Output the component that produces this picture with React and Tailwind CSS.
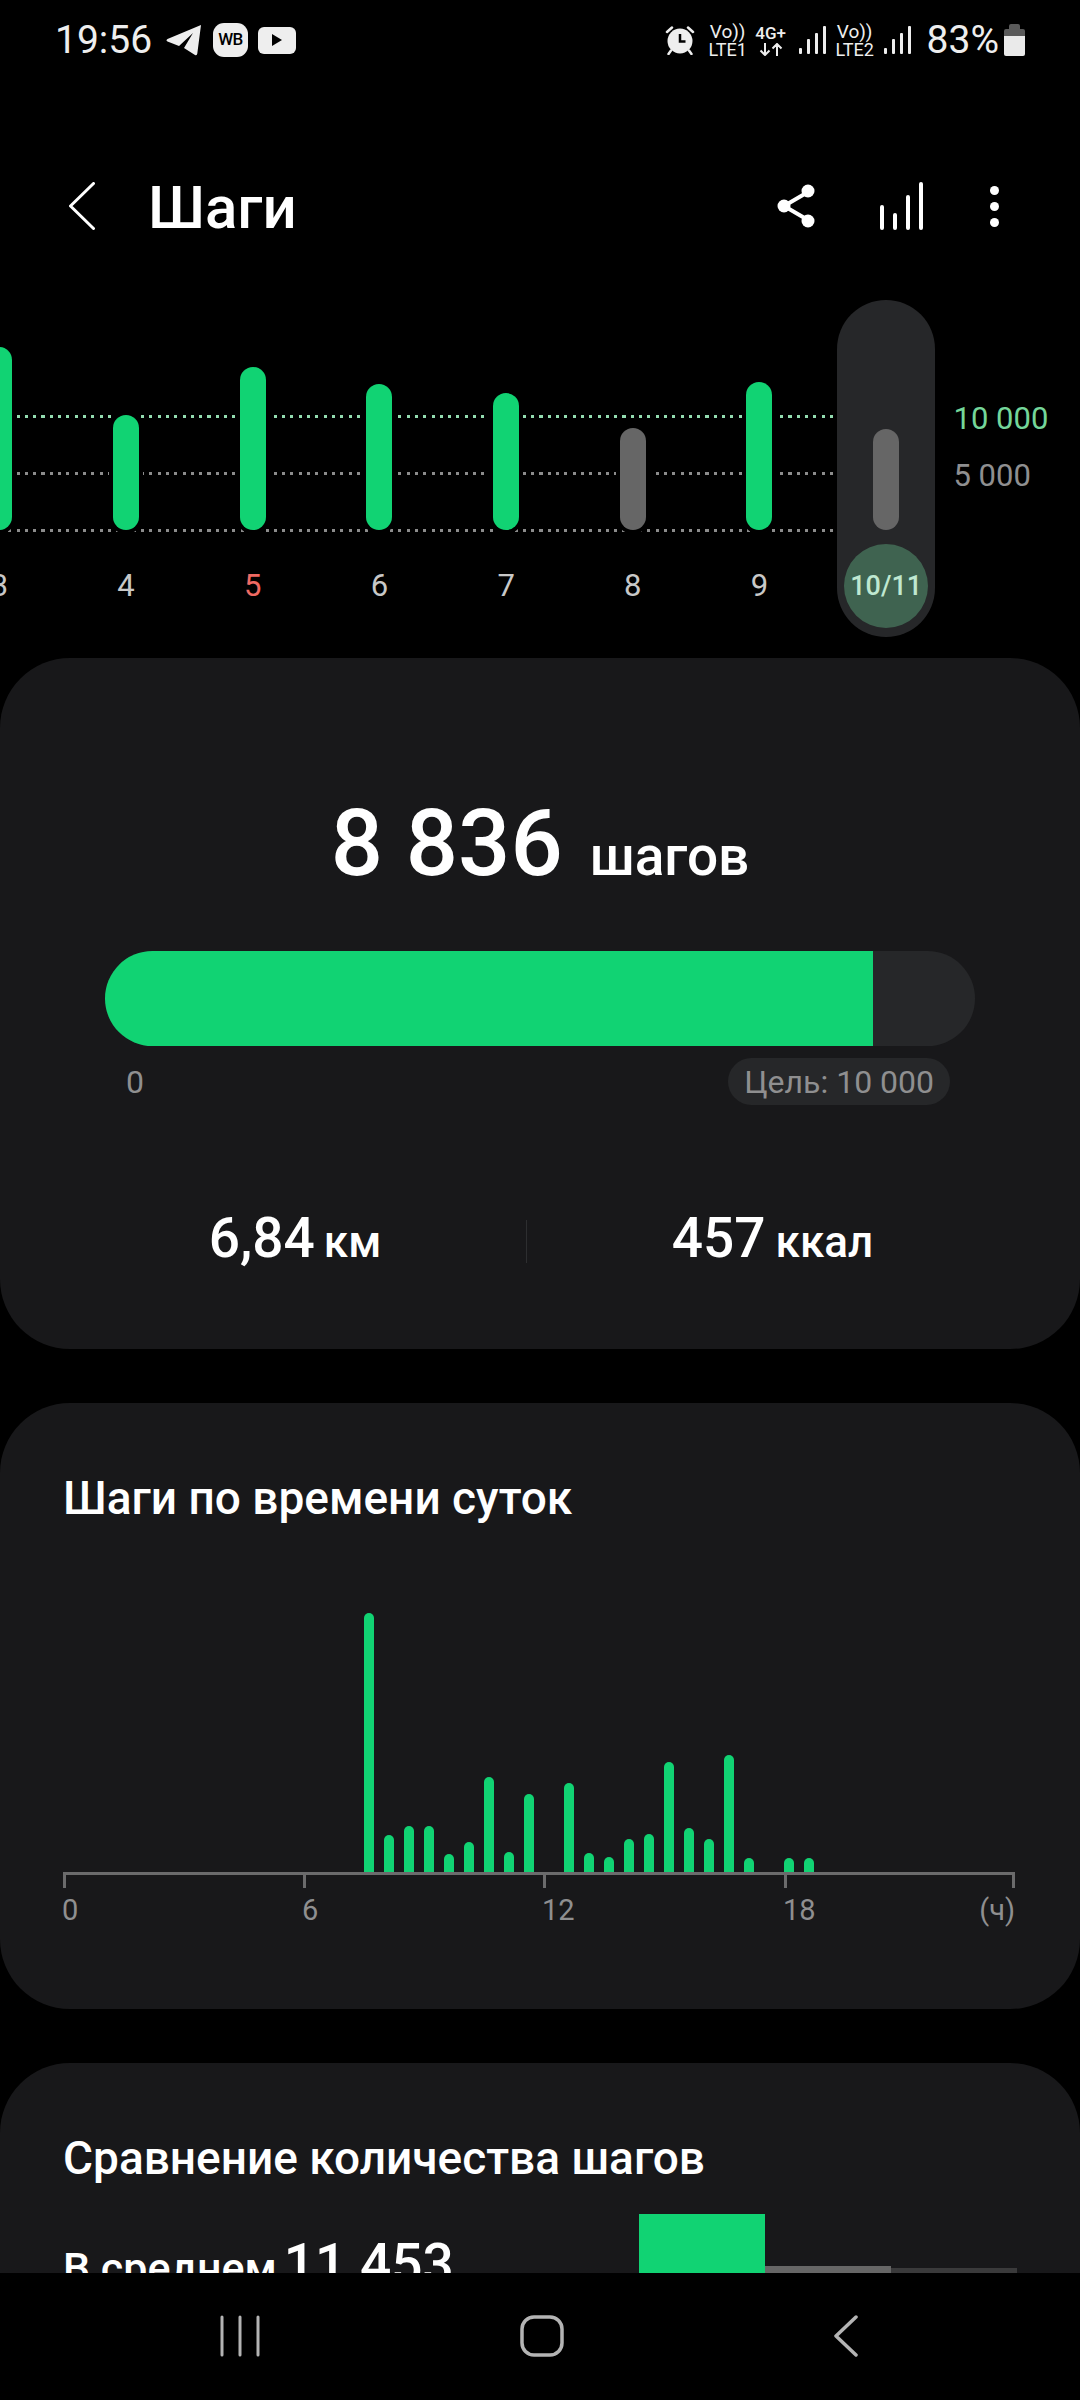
const week = [
  { day: "3", height: 183, color: "bg-[#11d373]", text: "text-[#c8c8c8]" },
  { day: "4", height: 115, color: "bg-[#11d373]", text: "text-[#c8c8c8]" },
  { day: "5", height: 163, color: "bg-[#11d373]", text: "text-[#ef6a63]" },
  { day: "6", height: 146, color: "bg-[#11d373]", text: "text-[#c8c8c8]" },
  { day: "7", height: 137, color: "bg-[#11d373]", text: "text-[#c8c8c8]" },
  { day: "8", height: 102, color: "bg-[#666666]", text: "text-[#c8c8c8]" },
  { day: "9", height: 148, color: "bg-[#11d373]", text: "text-[#c8c8c8]" },
];

// bar heights of the hourly chart, 0 = no steps in that slot
const hourly = [
  259, 37, 46, 46, 18, 30, 95, 20, 78, 0, 89, 19, 15, 33, 38, 110, 44, 33, 117, 14, 0, 14, 14,
];

function Telegram() {
  return (
    <svg width="36" height="32" viewBox="0 0 36 32" fill="#eeeeee">
      <path d="M35 1 L1.5 15 Q-0.5 16.500 1.500 17.500 L13 22 L27 9 L18 24 L29 31 Q31 32 31.300 29.500 Z" />
    </svg>
  );
}

function Alarm() {
  return (
    <svg width="30" height="30" viewBox="0 0 30 30">
      <circle cx="15" cy="16" r="12.500" fill="#eeeeee" />
      <path d="M15 9 V16.500 H20.500" fill="none" stroke="#000" strokeWidth="2.500" />
      <path d="M2 7 L7 2.500 M28 7 L23 2.500 M6 25.500 L3.500 29 M24 25.500 L26.500 29" stroke="#eeeeee" strokeWidth="2.500" strokeLinecap="round" />
    </svg>
  );
}

function Signal() {
  return (
    <svg width="28" height="28" viewBox="0 0 28 28" fill="#eeeeee">
      <rect x="0" y="22" width="3" height="6" rx="1" />
      <rect x="8" y="13" width="3" height="15" rx="1" />
      <rect x="16" y="7" width="3" height="21" rx="1" />
      <rect x="24" y="0" width="3" height="28" rx="1" />
    </svg>
  );
}

function SimBadge({ label }) {
  return (
    <div className="w-[40px] flex flex-col items-center text-[#eeeeee] leading-none">
      <span className="text-[19px] h-[19px] whitespace-nowrap">Vo))</span>
      <span className="text-[18px] h-[18px]">{label}</span>
    </div>
  );
}

function StatusBar() {
  return (
    <div className="h-[80px] flex items-center pl-[55px] pr-[55px] text-[#eeeeee]">
      <span className="text-[39px] leading-none w-[96px]">19:56</span>
      <div className="ml-[15px]">
        <Telegram />
      </div>
      <div className="ml-[11px] w-[35px] h-[34px] rounded-[11px] bg-[#eeeeee] flex items-center justify-center text-black text-[17px] font-medium tracking-[-0.5px]">
        WB
      </div>
      <div className="ml-[10px] w-[38px] h-[27px] rounded-[6px] bg-[#eeeeee] flex items-center justify-center">
        <svg width="12" height="12" viewBox="0 0 12 12" fill="#000">
          <path d="M1 0 L11 6 L1 12 Z" />
        </svg>
      </div>

      <div className="ml-auto flex items-center">
        <Alarm />
        <div className="ml-[13px]">
          <SimBadge label="LTE1" />
        </div>
        <div className="ml-[8px] w-[30px] flex flex-col items-center">
          <span className="text-[17px] leading-none h-[18px] font-medium whitespace-nowrap">4G+</span>
          <svg width="24" height="13" viewBox="0 0 24 13" fill="none" stroke="#eeeeee" strokeWidth="2">
            <path d="M6 0 V12 M1.500 7.500 L6 12 L10.500 7.500 M18 13 V1 M13.500 5.500 L18 1 L22.500 5.500" />
          </svg>
        </div>
        <div className="ml-[13px]">
          <Signal />
        </div>
        <div className="ml-[8px]">
          <SimBadge label="LTE2" />
        </div>
        <div className="ml-[9px]">
          <Signal />
        </div>
        <span className="ml-[15px] text-[39px] leading-none">83%</span>
        <svg className="ml-[5px]" width="21" height="32" viewBox="0 0 21 32">
          <path d="M5 5 V2 Q5 0 7 0 H14 Q16 0 16 2 V5 H19 Q21 5 21 7 V12 H0 V7 Q0 5 2 5 Z" fill="#5a5a5a" />
          <path d="M0 12 H21 V30 Q21 32 19 32 H2 Q0 32 0 30 Z" fill="#eaeaea" />
        </svg>
      </div>
    </div>
  );
}

function Header() {
  return (
    <div className="mt-[81px] h-[90px] flex items-center pl-[69px]">
      <svg width="26" height="48" viewBox="0 0 26 48" fill="none" stroke="#ffffff" strokeWidth="3" strokeLinecap="round" strokeLinejoin="round">
        <path d="M24.500 1.500 L1.500 24 L24.500 46.500" />
      </svg>
      <h1 className="ml-[53px] mt-[4px] text-[60px] leading-none font-medium text-white">Шаги</h1>
      <svg className="ml-auto" width="40" height="44" viewBox="0 0 40 44" fill="#ffffff">
        <path d="M31 8 L7 22 L31 36" fill="none" stroke="#ffffff" strokeWidth="4" />
        <circle cx="31" cy="7" r="6.500" />
        <circle cx="7" cy="22" r="6.500" />
        <circle cx="31" cy="37" r="6.500" />
      </svg>
      <svg className="ml-[62px]" width="44" height="48" viewBox="0 0 44 48" fill="#ffffff">
        <rect x="1" y="23" width="4" height="25" rx="2" />
        <rect x="14" y="31" width="4" height="17" rx="2" />
        <rect x="27" y="13" width="4" height="35" rx="2" />
        <rect x="40" y="0" width="4" height="48" rx="2" />
      </svg>
      <div className="ml-[67px] mr-[81px] flex flex-col items-center gap-[7px]">
        <div className="w-[9px] h-[9px] rounded-full bg-white" />
        <div className="w-[9px] h-[9px] rounded-full bg-white" />
        <div className="w-[9px] h-[9px] rounded-full bg-white" />
      </div>
    </div>
  );
}

function WeekChart() {
  return (
    <div className="relative mt-[49px] h-[337px] flex -ml-[64px]">
      {/* dotted goal lines sit behind the bars */}
      <div className="absolute left-[64px] top-[115px] w-[837px] h-[3px] bg-[repeating-linear-gradient(90deg,#93dcb0_0_3px,transparent_3px_8.300px)]" />
      <div className="absolute left-[64px] top-[172px] w-[837px] h-[3px] bg-[repeating-linear-gradient(90deg,#8c8c8c_0_3px,transparent_3px_8.300px)]" />
      <div className="absolute left-[64px] top-[229px] w-[837px] h-[3px] bg-[repeating-linear-gradient(90deg,#8c8c8c_0_3px,transparent_3px_8.300px)]" />

      {week.map((d) => (
        <div key={d.day} className="relative w-[126.700px] flex flex-col items-center">
          <div className="h-[230px] flex items-end">
            <div className={`w-[26px] rounded-full ring-[4px] ring-black ${d.color}`} style={{ height: d.height }} />
          </div>
          <span className={`mt-[36px] text-[31px] leading-[40px] ${d.text}`}>{d.day}</span>
        </div>
      ))}

      <div className="relative w-[126.700px] flex justify-center">
        <div className="w-[98px] h-[337px] rounded-full bg-[#262729] flex flex-col items-center">
          <div className="h-[230px] flex items-end">
            <div className="w-[26px] h-[101px] rounded-full bg-[#666666]" />
          </div>
          <div className="mt-[14px] w-[84px] h-[84px] rounded-full bg-[#3f6350] flex items-center justify-center text-[#bfe8d0] text-[27px] font-medium">
            10/11
          </div>
        </div>
      </div>

      <div className="relative ml-[4px] pt-[99px] flex flex-col gap-[17px] text-[31px] leading-[40px]">
        <span className="text-[#74d69a] whitespace-nowrap">10 000</span>
        <span className="text-[#8f8f90] whitespace-nowrap">5 000</span>
      </div>
    </div>
  );
}

function GoalCard() {
  return (
    <section className="mt-[21px] h-[691px] rounded-[70px] bg-[#18181a] pt-[136px]">
      <div className="h-[100px] flex justify-center items-baseline text-white font-medium leading-[100px]">
        <span className="text-[92px]">8 836</span>
        <span className="ml-[27px] text-[55px]">шагов</span>
      </div>
      <div className="mt-[57px] mx-[105px] h-[95px] rounded-full bg-[#262729] overflow-hidden">
        <div className="w-[768px] h-full bg-[#11d373]" />
      </div>
      <div className="mt-[12px] ml-[126px] mr-[130px] flex justify-between items-center h-[47px] text-[32px] text-[#8f8f90]">
        <span>0</span>
        <span className="h-[47px] px-[16px] rounded-full bg-[#262729] flex items-center">Цель: 10 000</span>
      </div>
      <div className="mt-[103px] flex items-center pl-[64px] text-white font-medium">
        <div className="w-[462px] flex justify-center items-baseline">
          <span className="text-[55px] leading-[60px]">6,84</span>
          <span className="ml-[9px] text-[44px]">км</span>
        </div>
        <div className="w-px h-[43px] bg-[#2d2e30]" />
        <div className="w-[491px] flex justify-center items-baseline">
          <span className="text-[55px] leading-[60px]">457</span>
          <span className="ml-[10px] text-[44px]">ккал</span>
        </div>
      </div>
    </section>
  );
}

function HourlyCard() {
  return (
    <section className="mt-[54px] h-[606px] rounded-[70px] bg-[#18181a] px-[63px] pt-[68px]">
      <h2 className="text-[46px] leading-[54px] font-medium text-white">Шаги по времени суток</h2>
      <div className="mt-[89px] h-[258px] flex items-end gap-[10px] ml-[301px]">
        {hourly.map((h, i) => (
          <div key={i} className="w-[10px] rounded-t-full bg-[#11d373]" style={{ height: h }} />
        ))}
      </div>
      <div className="flex w-[952px] h-[16px] border-t-[3px] border-[#6b6b6c]">
        <div className="w-[240px] border-l-[3px] border-[#6b6b6c]" />
        <div className="w-[240px] border-l-[3px] border-[#6b6b6c]" />
        <div className="w-[241px] border-l-[3px] border-[#6b6b6c]" />
        <div className="flex-1 border-x-[3px] border-[#6b6b6c]" />
      </div>
      <div className="mt-[4px] flex w-[952px] text-[29px] leading-[36px] text-[#8f8f90]">
        <span className="w-[240px] -ml-[1px]">0</span>
        <span className="w-[240px]">6</span>
        <span className="w-[241px]">12</span>
        <span className="flex-1 flex justify-between">
          18
          <span>(ч)</span>
        </span>
      </div>
    </section>
  );
}

function CompareCard() {
  return (
    <section className="mt-[54px] h-[400px] rounded-t-[70px] bg-[#18181a] px-[63px] pt-[68px]">
      <h2 className="text-[46px] leading-[54px] font-medium text-white">Сравнение количества шагов</h2>
      <div className="mt-[29px] flex items-start">
        <div className="mt-[20px] w-[576px] flex items-baseline text-white font-medium whitespace-nowrap">
          <span className="text-[43px] leading-[60px]">В среднем</span>
          <span className="ml-[7px] text-[55px] leading-[60px]">11 453</span>
        </div>
        <div className="flex items-start">
          <div className="w-[126px] h-[100px] bg-[#11d373]" />
          <div className="mt-[52px] w-[126px] h-[48px] bg-[#666666]" />
          <div className="mt-[54px] w-[126px] h-[46px] bg-[#3a3a3b]" />
        </div>
      </div>
    </section>
  );
}

function NavBar() {
  return (
    <nav className="flex-1 bg-black relative flex items-start pt-[42px] pl-[220px]">
      <svg width="40" height="42" viewBox="0 0 40 42" stroke="#b4b4b4" strokeWidth="3" strokeLinecap="round">
        <path d="M2 2 V40 M20 2 V40 M38 2 V40" />
      </svg>
      <svg className="ml-[260px]" width="44" height="42" viewBox="0 0 44 42" fill="none" stroke="#b4b4b4" strokeWidth="3.500">
        <rect x="2" y="2" width="40" height="38" rx="12" />
      </svg>
      <svg className="ml-[270px]" width="24" height="42" viewBox="0 0 24 42" fill="none" stroke="#b4b4b4" strokeWidth="3.500" strokeLinecap="round" strokeLinejoin="round">
        <path d="M22 2 L2 21 L22 40" />
      </svg>
    </nav>
  );
}

export default function App() {
  return (
    <div className="w-[1080px] h-[2400px] bg-black flex flex-col overflow-hidden font-['Roboto',sans-serif]">
      <main className="h-[2273px] overflow-hidden shrink-0">
        <StatusBar />
        <Header />
        <WeekChart />
        <GoalCard />
        <HourlyCard />
        <CompareCard />
      </main>
      <NavBar />
    </div>
  );
}
